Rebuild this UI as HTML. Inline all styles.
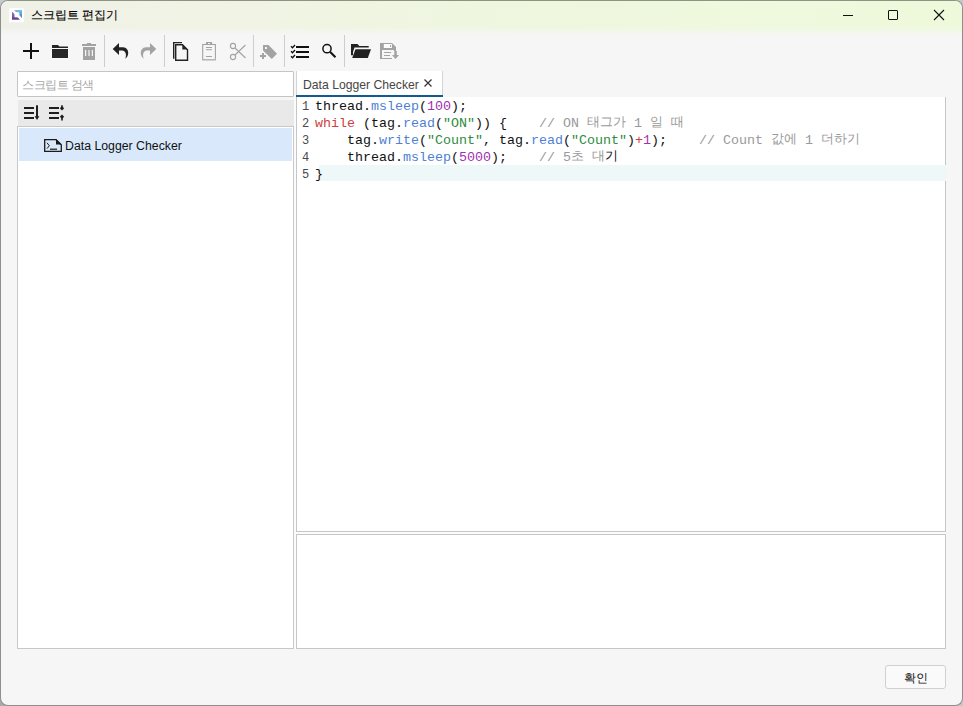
<!DOCTYPE html>
<html><head><meta charset="utf-8">
<style>
*{box-sizing:border-box;margin:0;padding:0}
html,body{width:963px;height:706px;overflow:hidden;background:#c6c6c6}
body{font-family:"Liberation Sans",sans-serif;font-size:12px;color:#1a1a1a;position:relative}
.abs{position:absolute}
#win{position:absolute;left:0;top:0;width:963px;height:706px;border:1px solid #8e8e8e;border-top-color:#8c9484;border-radius:8px;overflow:hidden;background:#f6f6f6}
#title{position:absolute;left:0;top:0;width:961px;height:34px;background:linear-gradient(180deg,rgba(246,246,246,0) 0px,rgba(246,246,246,0) 26px,rgba(246,246,246,0.5) 30px,#f6f6f6 34px),linear-gradient(90deg,#eff1e8 0px,#f1f3e5 200px,#eff6e0 450px,#eef9dd 750px,#eef9dc 963px)}
.sep{position:absolute;top:34px;width:1px;height:32px;background:#cdcdcd}
.box{position:absolute;background:#fff;border:1px solid #c6c6c6}
.code{font-family:"Liberation Mono",monospace;font-size:13.33px;white-space:pre;position:absolute;left:0;height:17px;line-height:17px}
.ln,.cl{position:absolute;font-family:"Liberation Mono",monospace;font-size:13.33px;white-space:pre;height:17px;line-height:17px}
.ln{left:302px;color:#4a4a4a;font-size:12px;margin-top:1px}
.cl{left:315px;color:#111}
.h{position:relative;top:-1px}
.f{color:#4f7fd6}.k{color:#d04040}.s{color:#2e8b3e}.n{color:#a030b0}.c{color:#9a9a9a}
</style></head><body>
<div class="abs" style="left:0;top:0;width:10px;height:10px;background:#c8c8d3"></div>
<div class="abs" style="left:0;top:696px;width:10px;height:10px;background:#a9a9a9"></div>
<div id="win">
  <div id="title">
    <svg class="abs" style="left:-1px;top:-1px" width="30" height="30" viewBox="0 0 30 30">
      <defs>
        <linearGradient id="gp" x1="0" y1="0" x2="0" y2="1"><stop offset="0" stop-color="#9a7cc8"/><stop offset="1" stop-color="#5b3d8e"/></linearGradient>
        <linearGradient id="gb" x1="0" y1="0" x2="0" y2="1"><stop offset="0" stop-color="#7fbfe8"/><stop offset="1" stop-color="#3584bd"/></linearGradient>
      </defs>
      <rect x="9" y="8" width="15" height="14.5" fill="#fff" stroke="#f0f0ec" stroke-width="0.6"/>
      <path d="M12 11.5 L20 19.8 H12 Z" fill="url(#gp)"/>
      <path d="M14 10 H22 V18 Z" fill="url(#gb)"/>
      <path d="M14.5 12.3 H19.3 V17.3 H14.5 Z" fill="#fff"/>
      <path d="M12 10 L22 20" stroke="#fff" stroke-width="1"/>
    </svg>
    <div class="abs" style="left:30px;top:6px;font-size:12px;color:#000;-webkit-text-stroke:0.12px #000">스크립트 편집기</div>
    <div class="abs" style="left:842px;top:14px;width:10px;height:1px;background:#111"></div>
    <div class="abs" style="left:887px;top:9px;width:10px;height:10px;border:1px solid #111;border-radius:1px"></div>
    <svg class="abs" style="left:932px;top:8px" width="12" height="12" viewBox="0 0 12 12"><path d="M1 1 L11 11 M11 1 L1 11" stroke="#111" stroke-width="1.1"/></svg>
  </div>

  <!-- toolbar -->
  <div class="sep" style="left:103px"></div>
  <div class="sep" style="left:163px"></div>
  <div class="sep" style="left:252px"></div>
  <div class="sep" style="left:283px"></div>
  <div class="sep" style="left:343px"></div>

  <!-- search box -->
  <div class="box" style="left:16px;top:70px;width:277px;height:26px;border-radius:1px;border-color:#c4c4c4">
    <div class="abs" style="left:4px;top:5px;color:#a8a8a8;letter-spacing:-0.5px">스크립트 검색</div>
  </div>
  <!-- sort bar -->
  <div class="abs" style="left:17px;top:99px;width:276px;height:27px;background:#e9e9e9"></div>
  <!-- list -->
  <div class="box" style="left:16px;top:125px;width:277px;height:523px;border-color:#c8c8c8">
    <div class="abs" style="left:1px;top:1px;width:273px;height:33px;background:#d9e9fb"></div>
    <div class="abs" style="left:47px;top:12px;font-size:12.3px;color:#111">Data Logger Checker</div>
  </div>

  <!-- tab -->
  <div class="abs" style="left:295px;top:70px;width:147px;height:27px;background:#fff;border-left:1px solid #d4d4d4;border-right:1px solid #d4d4d4">
    <div class="abs" style="left:6px;top:7px;color:#454545;font-size:12.2px">Data Logger Checker</div>
    <div class="abs" style="left:-1px;top:24px;width:147px;height:2px;background:#135b8e"></div>
  </div>
  <!-- editor -->
  <div class="box" style="left:295px;top:96px;width:650px;border-top:none;height:435px">
    <div class="abs" style="left:22px;top:68px;width:627px;height:16px;background:#eff8f8"></div>
  </div>
  <!-- output -->
  <div class="box" style="left:295px;top:533px;width:650px;height:115px"></div>
  <div class="abs" style="left:293px;top:96px;width:2px;height:552px;background:#fbfbfb"></div>
  <div class="abs" style="left:295px;top:531px;width:650px;height:2px;background:#fbfbfb"></div>

  <!-- button -->
  <div class="abs" style="left:884px;top:664px;width:61px;height:24px;border:1px solid #d0d0d0;border-radius:3px;background:#fafafa">
    <div class="abs" style="left:18px;top:4px;color:#111">확인</div>
  </div>
</div>

  <!-- code -->
  <div class="abs" style="left:0;top:0;width:963px;height:706px">
    <div class="ln" style="top:98px">1</div>
    <div class="ln" style="top:115px">2</div>
    <div class="ln" style="top:132px">3</div>
    <div class="ln" style="top:149px">4</div>
    <div class="ln" style="top:166px">5</div>
    <div class="cl" style="top:98px">thread.<span class="f">msleep</span>(<span class="n">100</span>);</div>
    <div class="cl" style="top:115px"><span class="k">while</span> (tag.<span class="f">read</span>(<span class="s">"ON"</span>)) {    <span class="c">// ON <span class="h">태그가</span> 1 <span class="h">일</span> <span class="h">때</span></span></div>
    <div class="cl" style="top:132px">    tag.<span class="f">write</span>(<span class="s">"Count"</span>, tag.<span class="f">read</span>(<span class="s">"Count"</span>)<span class="k">+</span><span class="n">1</span>);    <span class="c">// Count <span class="h">값에</span> 1 <span class="h">더하기</span></span></div>
    <div class="cl" style="top:149px">    thread.<span class="f">msleep</span>(<span class="n">5000</span>);    <span class="c">// 5<span class="h">초</span> <span class="h">대</span></span><span class="h">기</span></div>
    <div class="cl" style="top:166px">}</div>
  </div>

<svg class="abs" style="left:0;top:0" width="963" height="706" viewBox="0 0 963 706">
  <!-- plus -->
  <rect x="23" y="50" width="16" height="2" fill="#111"/>
  <rect x="30" y="43" width="2" height="16" fill="#111"/>
  <!-- folder -->
  <path d="M52 45 H58 L59.5 46.5 H68 V48 H52 Z" fill="#262626"/>
  <rect x="52" y="49" width="16" height="9" fill="#262626"/>
  <!-- trash -->
  <g fill="#a3a3a3">
    <rect x="82" y="44" width="14" height="2"/>
    <rect x="87" y="43" width="4" height="1"/>
    <path d="M83 47 H95 V60 H83 Z M85 50 V56 H86.2 V50 Z M88.4 50 V56 H89.6 V50 Z M91.8 50 V56 H93 V50 Z" fill-rule="evenodd"/>
  </g>
  <!-- undo -->
  <path d="M112.7 49 L119 43 V47.3 H123 C126.5 47.3 128.6 50.5 128.2 53.5 C127.9 56 126.8 57.6 125.2 58.8 C126.2 56.5 126.3 53.8 125 52 C124 50.8 122.8 50.5 121 50.5 H119 V55 Z" fill="#222"/>
  <!-- redo (mirror) -->
  <path d="M156.3 49 L150 43 V47.3 H146 C142.5 47.3 140.4 50.5 140.8 53.5 C141.1 56 142.2 57.6 143.8 58.8 C142.8 56.5 142.7 53.8 144 52 C145 50.8 146.2 50.5 148 50.5 H150 V55 Z" fill="#a3a3a3"/>
  <!-- copy -->
  <path d="M173.7 58.7 V42.6 H182" fill="none" stroke="#222" stroke-width="1.4"/>
  <path d="M175.7 44.7 H182.5 L187.5 49.7 V60.3 H175.7 Z" fill="none" stroke="#222" stroke-width="1.4"/>
  <path d="M182.3 44.3 V49.6 H187.7 Z" fill="#222"/>
  <!-- clipboard -->
  <g fill="none" stroke="#a3a3a3">
    <rect x="202.7" y="44.5" width="12.7" height="15.2" stroke-width="1.1"/>
  </g>
  <rect x="202.2" y="59" width="13.7" height="1.3" fill="#b5b5b5"/>
  <path d="M206 42 H212 V45 H206 Z M208 43 V44 H210 V43 Z" fill="#a3a3a3" fill-rule="evenodd"/>
  <rect x="206" y="47" width="6" height="1" fill="#a3a3a3"/>
  <rect x="206" y="49.2" width="6" height="1" fill="#a3a3a3"/>
  <rect x="206" y="56" width="6" height="1" fill="#a3a3a3"/>
  <!-- scissors -->
  <g fill="none" stroke="#a3a3a3" stroke-width="1.1">
    <circle cx="233" cy="46" r="2.6"/>
    <circle cx="233" cy="57" r="2.6"/>
    <path d="M235 48 L245.5 58 M235 55 L245.5 45"/>
  </g>
  <!-- tag plus -->
  <path d="M263 45.1 H268.5 L277 53.8 L271.8 59 L263 50.6 Z M265 47 V49 H267 V47 Z" fill="#a3a3a3" fill-rule="evenodd"/>
  <rect x="260" y="55" width="6" height="2" fill="#a3a3a3"/>
  <rect x="262" y="53" width="2" height="6" fill="#a3a3a3"/>
  <!-- checklist -->
  <g fill="#111">
    <rect x="296" y="46" width="13" height="2"/>
    <rect x="296" y="51" width="13" height="2"/>
    <rect x="296" y="56" width="13" height="2"/>
  </g>
  <g fill="none" stroke="#111" stroke-width="1.35">
    <path d="M291 46.2 L292.5 47.7 L295 45"/>
    <path d="M291 51.2 L292.5 52.7 L295 50"/>
    <path d="M291 56.2 L292.5 57.7 L295 55"/>
  </g>
  <!-- search -->
  <circle cx="327" cy="48.7" r="4.1" fill="none" stroke="#111" stroke-width="1.5"/>
  <path d="M330.2 52 L335.5 57.3" stroke="#111" stroke-width="2"/>
  <!-- open folder -->
  <path d="M351 44 H357.5 L359.3 46 H368.7 V47.6 H354.5 L353 52 V55.3 H351 Z" fill="#222"/>
  <path d="M355.5 49.2 H371 L367.8 58 H352.2 Z" fill="#222"/>
  <!-- save -->
  <path d="M380 43 H392 L396 47 V51 H394 V50 H382 V58 H392 V59 H380 Z" fill="#a3a3a3"/>
  <path d="M383.8 44 H391.9 V48 H383.8 Z" fill="#fff"/>
  <rect x="390" y="45" width="1" height="2" fill="#a3a3a3"/>
  <rect x="384" y="52" width="7" height="1" fill="#a3a3a3"/>
  <rect x="384" y="55" width="6" height="1" fill="#a3a3a3"/>
  <path d="M394.3 51 H396.8 V55 H399 L395.5 59 L392 55 H394.3 Z" fill="#a3a3a3"/>
  <!-- sort icons -->
  <g fill="#1e1e1e">
    <rect x="24" y="107" width="10" height="2"/>
    <rect x="24" y="112" width="10" height="2"/>
    <rect x="24" y="117" width="10" height="2"/>
    <rect x="36" y="105.3" width="2" height="12"/>
    <path d="M34.6 116.2 H39.4 L37 120 Z"/>
    <rect x="49" y="107" width="10" height="2"/>
    <rect x="49" y="112" width="10" height="2"/>
    <rect x="49" y="117" width="10" height="2"/>
    <rect x="61.2" y="105.3" width="1.6" height="3.5"/>
    <path d="M59.8 108.2 L62 106.3 L64.2 108.2 L62 110.6 Z"/>
    <path d="M59.8 116.8 L62 114.4 L64.2 116.8 L62 118.7 Z"/>
    <rect x="61.2" y="116.5" width="1.6" height="4"/>
  </g>
  <!-- script icon -->
  <path d="M44.7 139.7 H56 L61.3 145 V151.3 H44.7 Z" fill="none" stroke="#1a1a1a" stroke-width="1.3"/>
  <path d="M56 139 V144.5 H62 Z" fill="#1a1a1a"/>
  <path d="M47 142.8 L49.3 145.7 L47 148.6" fill="none" stroke="#1a1a1a" stroke-width="1"/>
  <rect x="50" y="148.6" width="7" height="1.2" fill="#1a1a1a"/>
  <!-- tab close -->
  <path d="M424.5 79.5 L431.5 86.5 M431.5 79.5 L424.5 86.5" stroke="#333" stroke-width="1.2"/>
</svg>
</body></html>
